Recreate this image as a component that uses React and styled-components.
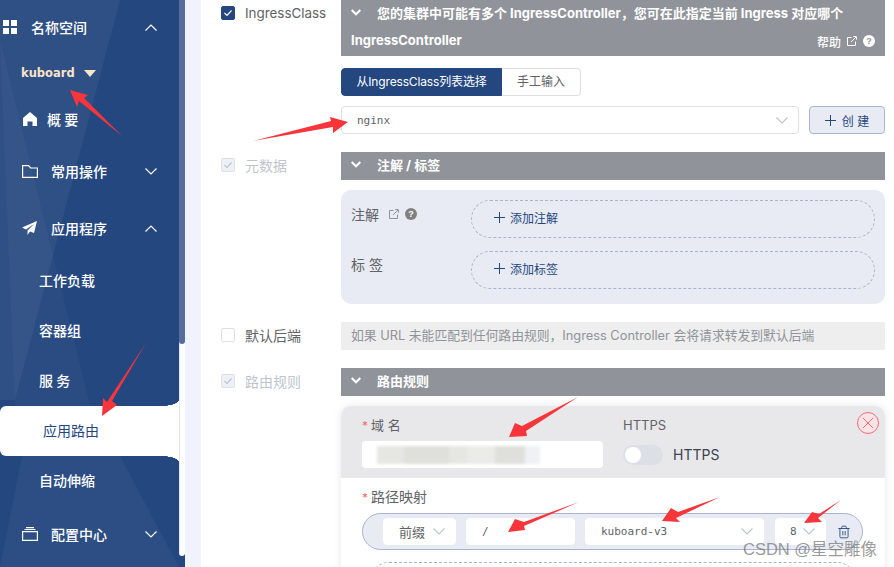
import React from 'react'
import styled, { createGlobalStyle } from 'styled-components'
import { Trash2 } from 'lucide-react'

const cjk = '"Noto Sans CJK SC", sans-serif'
const body = `Inter, ${cjk}`
const primary = '#24477f'
const panel = '#e8ebf3'

const GlobalStyle = createGlobalStyle`
  html, body { margin: 0; padding: 0; background: #fff; }
  body { font-family: ${body}; }
  * { box-sizing: border-box; }
`

const Page = styled.div`
  position: relative;
  display: flex;
  width: 894px;
  height: 567px;
  overflow: hidden;
  background: #fff;
`

const Sidebar = styled.aside`
  position: relative;
  display: flex;
  flex: 0 0 185px;
  height: 567px;
  background: ${primary};
`

const Decor = styled.div`
  position: absolute;
  inset: 0;
  background: rgba(255, 255, 255, ${(p) => p.$alpha});
  clip-path: polygon(${(p) => p.$points});
`

const Menu = styled.nav`
  position: relative;
  display: flex;
  flex-direction: column;
  flex: 0 0 179px;
`

const Group = styled.div`
  display: flex;
  align-items: center;
  height: ${(p) => p.$h}px;
  margin-bottom: ${(p) => p.$mb || 0}px;
  padding: 0 22px 2px ${(p) => p.$pl}px;
  color: #fff;
  font-size: 14px;
  font-weight: 500;
  font-family: ${cjk};
  svg.lead { flex: 0 0 auto; margin-right: ${(p) => p.$gap}px; }
  span { flex: 1; white-space: pre; }
`

const Namespace = styled.div`
  display: flex;
  align-items: center;
  gap: 9px;
  height: 34px;
  padding-left: 21px;
  color: #fbe3c8;
  font-family: "DejaVu Sans", sans-serif;
  font-size: 11.5px;
  font-weight: 700;
`

const Caret = styled.i`
  width: 0;
  height: 0;
  border-left: 6px solid transparent;
  border-right: 6px solid transparent;
  border-top: 7px solid #fbe3c8;
`

const SubItem = styled.div`
  position: relative;
  display: flex;
  align-items: center;
  height: 50px;
  padding-left: ${(p) => (p.$active ? 43 : 39)}px;
  padding-bottom: 2px;
  font-family: ${cjk};
  font-size: 14px;
  font-weight: ${(p) => (p.$active ? 400 : 500)};
  white-space: pre;
  color: ${(p) => (p.$active ? primary : '#fff')};
  background: ${(p) => (p.$active ? '#fff' : 'transparent')};
  border-radius: ${(p) => (p.$active ? '6px 0 0 6px' : 0)};
  ${(p) =>
    p.$active &&
    `
    &::before, &::after {
      content: '';
      position: absolute;
      right: 0;
      width: 18px;
      height: 6px;
    }
    &::before { top: -6px; background: radial-gradient(ellipse 18px 6px at 0 0, ${primary} 98%, #fff 100%); }
    &::after { bottom: -6px; background: radial-gradient(ellipse 18px 6px at 0 100%, ${primary} 98%, #fff 100%); }
  `}
`

const ScrollTrack = styled.div`
  flex: 0 0 6px;
  height: 556px;
  background: #fff;
  border-radius: 0 0 3px 3px;
  border-left: 1px solid #e4e7ef;
`

const ScrollThumb = styled.div`
  height: 344px;
  margin-left: -1px;
  background: #566d99;
  border-radius: 0 0 3px 3px;
`

const Gutter = styled.div`
  flex: 0 0 16px;
  background: #f0f3fb;
`

const Main = styled.main`
  flex: 1;
  display: flex;
  flex-direction: column;
  gap: 18px;
  padding: 0 9px 0 20px;
`

const FormRow = styled.section`
  display: flex;
`

const LabelCell = styled.div`
  flex: 0 0 120px;
  display: flex;
  align-items: center;
  gap: 10px;
  height: 28px;
  padding-bottom: 2px;
  font-size: ${(p) => p.$size || 14}px;
  color: ${(p) => (p.$off ? '#c0c4cc' : '#606266')};
  font-family: ${body};
`

const Check = styled.span`
  display: flex;
  align-items: center;
  justify-content: center;
  width: 14px;
  height: 14px;
  border-radius: 2px;
  border: 1px solid ${(p) => (p.$on ? primary : '#dcdfe6')};
  background: ${(p) => (p.$on ? primary : p.$off ? '#edf0f6' : '#fff')};
`

const Content = styled.div`
  flex: 1;
  display: flex;
  flex-direction: column;
  min-width: 0;
`

const Bar = styled.div`
  background: #909399;
  color: #fff;
  font-size: 13px;
  font-weight: 700;
  padding: 0 10px;
`

const BarLine = styled.div`
  display: flex;
  align-items: center;
  height: ${(p) => p.$h || 28}px;
  padding-bottom: ${(p) => p.$pb ?? 4}px;
  white-space: nowrap;
  justify-content: ${(p) => (p.$spread ? 'space-between' : 'flex-start')};
  svg.lead { margin-right: 16px; }
`

const HelpLink = styled.span`
  display: flex;
  align-items: center;
  font-size: 12px;
  font-weight: 500;
  gap: 6px;
  margin-top: 3px;
`

const Tabs = styled.div`
  display: flex;
  margin-top: 12px;
`

const Tab = styled.div`
  display: flex;
  align-items: center;
  justify-content: center;
  height: 28px;
  width: ${(p) => p.$w}px;
  padding-bottom: 3px;
  font-size: 12px;
  letter-spacing: ${(p) => (p.$on ? -0.15 : 0)}px;
  color: ${(p) => (p.$on ? '#fff' : '#606266')};
  background: ${(p) => (p.$on ? primary : '#fff')};
  border: 1px solid ${(p) => (p.$on ? primary : '#dcdfe6')};
  border-left-width: ${(p) => (p.$on ? 1 : 0)}px;
  border-radius: ${(p) => (p.$on ? '4px 0 0 4px' : '0 4px 4px 0')};
`

const PickRow = styled.div`
  display: flex;
  gap: 10px;
  margin-top: 10px;
`

const Select = styled.div`
  display: flex;
  align-items: center;
  justify-content: space-between;
  width: ${(p) => p.$w}px;
  margin-left: ${(p) => p.$ml || 0}px;
  height: ${(p) => p.$h || 28}px;
  padding: 0 ${(p) => p.$pr ?? 10}px 0 ${(p) => p.$pl ?? 15}px;
  background: #fff;
  border: 1px solid ${(p) => (p.$flat ? '#fff' : '#dcdfe6')};
  border-radius: 4px;
  color: #606266;
  font-family: ${(p) => (p.$mono ? '"DejaVu Sans Mono", monospace' : cjk)};
  font-size: ${(p) => (p.$mono ? 11 : 13)}px;
  white-space: nowrap;
`

const CreateButton = styled.div`
  display: flex;
  align-items: center;
  justify-content: center;
  gap: 6px;
  width: 76px;
  height: 28px;
  background: ${panel};
  border: 1px solid #a9b5cf;
  border-radius: 4px;
  color: ${primary};
  font-size: 12px;
  white-space: pre;
`

const AnnotPanel = styled.div`
  display: flex;
  flex-direction: column;
  gap: 13px;
  margin-top: 10px;
  padding: 10px 10px 15px;
  background: ${panel};
  border-radius: 10px;
`

const AnnotRow = styled.div`
  display: flex;
`

const AnnotLabel = styled.div`
  flex: 0 0 120px;
  display: flex;
  align-items: center;
  gap: 6px;
  height: 30px;
  padding-bottom: ${(p) => p.$pb}px;
  font-size: 14px;
  color: #606266;
  white-space: pre;
`

const HelpDot = styled.span`
  display: flex;
  align-items: center;
  justify-content: center;
  width: 12px;
  height: 12px;
  border-radius: 50%;
  background: ${(p) => p.$bg};
  color: ${(p) => p.$fg};
  font: 700 9px "Liberation Sans", sans-serif;
`

const DashedAdd = styled.div`
  flex: 1;
  display: flex;
  align-items: center;
  gap: 5px;
  height: 38px;
  padding: 0 0 4px 22px;
  border: 1px dashed #a9b5cf;
  border-radius: 19px;
  color: ${primary};
  font-size: 12px;
`

const Hint = styled.div`
  display: flex;
  align-items: center;
  height: 28px;
  padding: 0 0 4px 10px;
  background: #eeeeee;
  color: #909399;
  font-size: 12.8px;
  white-space: nowrap;
`

const RuleCard = styled.div`
  position: relative;
  margin-top: 10px;
  border-radius: 10px 10px 0 0;
  box-shadow: 0 0 8px rgba(0, 0, 0, 0.1);
  background: #fff;
  overflow: hidden;
`

const CardTop = styled.div`
  display: flex;
  gap: 20px;
  height: 72px;
  padding: 10px 21px 0;
  background: #e8e8eb;
`

const Field = styled.div`
  display: flex;
  flex-direction: column;
  width: ${(p) => p.$w}px;
`

const FieldLabel = styled.div`
  height: 18px;
  margin-bottom: 7px;
  line-height: 18px;
  font-size: ${(p) => p.$size || 13}px;
  color: #606266;
  white-space: pre;
  em { color: #f56c6c; font-style: normal; margin-right: 3px; font-size: 12px; }
`

const HostInput = styled.div`
  display: flex;
  align-items: center;
  height: 27px;
  padding-left: 15px;
  background: #fff;
  border-radius: 4px;
`

const Blurred = styled.div`
  width: 181px;
  height: 18px;
  filter: blur(1.5px);
  background: linear-gradient(
    90deg,
    #e6e6e3 0 15%,
    #dfe0dc 15% 40%,
    #e6e6e3 40% 50%,
    #ebebe8 50% 65%,
    #dfe0dc 65% 82%,
    #eff1f5 82% 90%,
    #fff 90%
  );
`

const SwitchRow = styled.div`
  display: flex;
  align-items: center;
  gap: 10px;
  height: 27px;
  font-size: 14px;
  color: #3c4250;
`

const SwitchTrack = styled.span`
  display: flex;
  align-items: center;
  width: 40px;
  height: 20px;
  padding-left: 2px;
  border-radius: 10px;
  background: #dcdfe6;
  &::before {
    content: '';
    width: 16px;
    height: 16px;
    border-radius: 50%;
    background: #fff;
  }
`

const CloseBadge = styled.span`
  position: absolute;
  top: 6px;
  right: 6px;
  display: flex;
  align-items: center;
  justify-content: center;
  width: 22px;
  height: 22px;
  border-radius: 50%;
  border: 1px solid #f56c7c;
  background: #fbe3e6;
`

const CardBody = styled.div`
  padding: 10px 21px 0;
`

const PathPill = styled.div`
  display: flex;
  align-items: center;
  width: 501px;
  height: 37px;
  padding-left: 20px;
  background: ${panel};
  border: 1px solid #a9b5cf;
  border-radius: 19px;
  gap: 10px;
  svg.trash { margin-left: 1px; color: ${primary}; flex: 0 0 auto; }
`

const DashedNext = styled.div`
  width: 486px;
  height: 38px;
  margin: 12px 0 0 8px;
  border: 1px dashed #a9b5cf;
  border-radius: 19px;
`

const Overlay = styled.svg`
  position: absolute;
  left: 0;
  top: 0;
  pointer-events: none;
`

const Watermark = styled.div`
  position: absolute;
  left: 743px;
  top: 536px;
  color: rgba(110, 110, 110, 0.7);
  font: 16.5px "Liberation Sans", ${cjk};
  white-space: nowrap;
`

const Chevron = ({ up, color = '#fff', w = 12, h = 7, sw = 1.2 }) => (
  <svg width={w} height={h} viewBox="0 0 12 7" fill="none" stroke={color} strokeWidth={sw}>
    <path d={up ? 'M.5 6.5 6 1l5.5 5.5' : 'M.5.5 6 6 11.5.5'} />
  </svg>
)

const BarChevron = () => (
  <svg className="lead" width="10" height="7" viewBox="0 0 10 7" fill="none" stroke="#fff" strokeWidth="2">
    <path d="M.7 1 5 5.3 9.3 1" />
  </svg>
)

const Tick = ({ color }) => (
  <svg width="10" height="8" viewBox="0 0 10 8" fill="none" stroke={color} strokeWidth="1.2">
    <path d="M1.5 4 4 6.5 8.5 1.5" />
  </svg>
)

const Plus = ({ color = primary, size = 11 }) => (
  <svg width={size} height={size} viewBox="0 0 11 11" fill="none" stroke={color} strokeWidth="1">
    <path d="M5.5 0v11M0 5.5h11" />
  </svg>
)

const LinkOut = ({ color }) => (
  <svg width="10" height="10" viewBox="0 0 10 10" fill="none" stroke={color} strokeWidth="1">
    <path d="M4.5 1.5H.5v8h8v-4M4 6l5-5M6.2.6h3.2v3.2" />
  </svg>
)

const GridIcon = () => (
  <svg className="lead" width="14" height="14" viewBox="0 0 14 14" fill="#fff">
    <path d="M0 0h6v6H0zM8 0h6v6H8zM0 8h6v6H0zM8 8h6v6H8z" />
  </svg>
)

const HomeIcon = () => (
  <svg className="lead" width="14" height="14" viewBox="0 0 14 14" fill="#fff">
    <path d="M7 0 14 6v8H9.500V9.500h-5V14H0V6z" />
  </svg>
)

const FolderIcon = () => (
  <svg className="lead" width="16" height="13" viewBox="0 0 16 13" fill="none" stroke="#fff" strokeWidth="1.2">
    <path d="M.6.6h6l2 2.4h6.800v9.400H.6z" />
  </svg>
)

const PlaneIcon = () => (
  <svg className="lead" width="15" height="14" viewBox="0 0 15 14" fill="#fff">
    <path d="M15 0 0 6.500l4 2L12 3 5.500 9.500V14L8 10.500l4 1.500z" />
  </svg>
)

const BoxIcon = () => (
  <svg className="lead" width="16" height="14" viewBox="0 0 16 14" fill="none" stroke="#fff" strokeWidth="1.2">
    <path d="M.6 4.600h14.800v8.800H.6zM2.500 2.500h11M4 .6h8" />
  </svg>
)

const arrows = [
  '122,136 84,98 88,95 70,90 77,107 79,101',
  '146,343 112,401 117,405 102,416 103,398 107,402',
  '253,141 331,121 330,117 348,122 333,133 333,127',
  '578,397 522,426 515,423 509,437 527,436 526,431',
  '579,502 524,522 515,519 508,532 525,530 524,526',
  '720,497 678,512 671,508 662,521 680,522 676,518',
  '841,500 819,514 812,512 804,523 822,522 818,518',
]

function App() {
  return (
    <Page>
      <GlobalStyle />
      <Sidebar>
        <Decor $alpha={0.05} $points="0 40px, 0 0, 120px 0, 15px 400px, 0 400px" />
        <Decor $alpha={0.03} $points="0 40px, 90px 406px, 15px 406px" />
        <Decor $alpha={0.04} $points="120px 456px, 179px 567px, 0 567px, 22px 456px" />
        <Menu>
          <Group $h={56} $pl={3} $gap={14}>
            <GridIcon /><span>名称空间</span><Chevron up />
          </Group>
          <Namespace>kuboard<Caret /></Namespace>
          <Group $h={60} $pl={23} $gap={10}>
            <HomeIcon /><span>概 要</span>
          </Group>
          <Group $h={44} $mb={8} $pl={22} $gap={13}>
            <FolderIcon /><span>常用操作</span><Chevron />
          </Group>
          <Group $h={54} $pl={22} $gap={14}>
            <PlaneIcon /><span>应用程序</span><Chevron up />
          </Group>
          <SubItem>工作负载</SubItem>
          <SubItem>容器组</SubItem>
          <SubItem>服 务</SubItem>
          <SubItem $active>应用路由</SubItem>
          <SubItem>自动伸缩</SubItem>
          <Group $h={58} $pl={22} $gap={13}>
            <BoxIcon /><span>配置中心</span><Chevron />
          </Group>
        </Menu>
        <ScrollTrack><ScrollThumb /></ScrollTrack>
      </Sidebar>
      <Gutter />
      <Main>
        <FormRow>
          <LabelCell $size={13.4}>
            <Check $on><Tick color="#fff" /></Check>IngressClass
          </LabelCell>
          <Content>
            <Bar>
              <BarLine $h={27} $pb={2}>
                <BarChevron />您的集群中可能有多个 IngressController，您可在此指定当前 Ingress 对应哪个
              </BarLine>
              <BarLine $h={29} $pb={4} $spread>
                IngressController
                <HelpLink>帮助 <LinkOut color="#fff" /><HelpDot $bg="#fff" $fg="#909399">?</HelpDot></HelpLink>
              </BarLine>
            </Bar>
            <Tabs>
              <Tab $on $w={161}>从IngressClass列表选择</Tab>
              <Tab $w={79}>手工输入</Tab>
            </Tabs>
            <PickRow>
              <Select $w={458} $mono>nginx<Chevron color="#c0c4cc" /></Select>
              <CreateButton><Plus />创 建</CreateButton>
            </PickRow>
          </Content>
        </FormRow>
        <FormRow>
          <LabelCell $off>
            <Check $off><Tick color="#c0c4cc" /></Check>元数据
          </LabelCell>
          <Content>
            <Bar><BarLine><BarChevron />注解 / 标签</BarLine></Bar>
            <AnnotPanel>
              <AnnotRow>
                <AnnotLabel $pb={2}>注解 <LinkOut color="#909399" /><HelpDot $bg="#808080" $fg="#fff">?</HelpDot></AnnotLabel>
                <DashedAdd><Plus />添加注解</DashedAdd>
              </AnnotRow>
              <AnnotRow>
                <AnnotLabel $pb={4}>标 签</AnnotLabel>
                <DashedAdd><Plus />添加标签</DashedAdd>
              </AnnotRow>
            </AnnotPanel>
          </Content>
        </FormRow>
        <FormRow>
          <LabelCell><Check />默认后端</LabelCell>
          <Content>
            <Hint>如果 URL 未能匹配到任何路由规则，Ingress Controller 会将请求转发到默认后端</Hint>
          </Content>
        </FormRow>
        <FormRow>
          <LabelCell $off>
            <Check $off><Tick color="#c0c4cc" /></Check>路由规则
          </LabelCell>
          <Content>
            <Bar><BarLine><BarChevron />路由规则</BarLine></Bar>
            <RuleCard>
              <CardTop>
                <Field $w={241}>
                  <FieldLabel><em>*</em>域 名</FieldLabel>
                  <HostInput><Blurred /></HostInput>
                </Field>
                <Field $w={120}>
                  <FieldLabel>HTTPS</FieldLabel>
                  <SwitchRow><SwitchTrack />HTTPS</SwitchRow>
                </Field>
              </CardTop>
              <CloseBadge>
                <svg width="10" height="10" viewBox="0 0 10 10" stroke="#f56c7c" strokeWidth="1">
                  <path d="M0 0l10 10M10 0 0 10" />
                </svg>
              </CloseBadge>
              <CardBody>
                <FieldLabel $size={14}><em>*</em>路径映射</FieldLabel>
                <PathPill>
                  <Select $w={73} $h={27} $flat $pl={15} $pr={10}>前缀<Chevron color="#c0c4cc" /></Select>
                  <Select $w={109} $h={27} $flat $mono>/</Select>
                  <Select $w={179} $h={27} $flat $mono>kuboard-v3<Chevron color="#c0c4cc" /></Select>
                  <Select $w={51} $h={27} $ml={1} $flat $mono $pl={14} $pr={10}>8<Chevron color="#c0c4cc" /></Select>
                  <Trash2 className="trash" size={14} strokeWidth={1.5} />
                </PathPill>
                <DashedNext />
              </CardBody>
            </RuleCard>
          </Content>
        </FormRow>
      </Main>
      <Overlay width="894" height="567" viewBox="0 0 894 567">
        {arrows.map((points) => (
          <polygon key={points} points={points} fill="#f8353a" />
        ))}
      </Overlay>
      <Watermark>CSDN @星空雕像</Watermark>
    </Page>
  )
}

export default App
